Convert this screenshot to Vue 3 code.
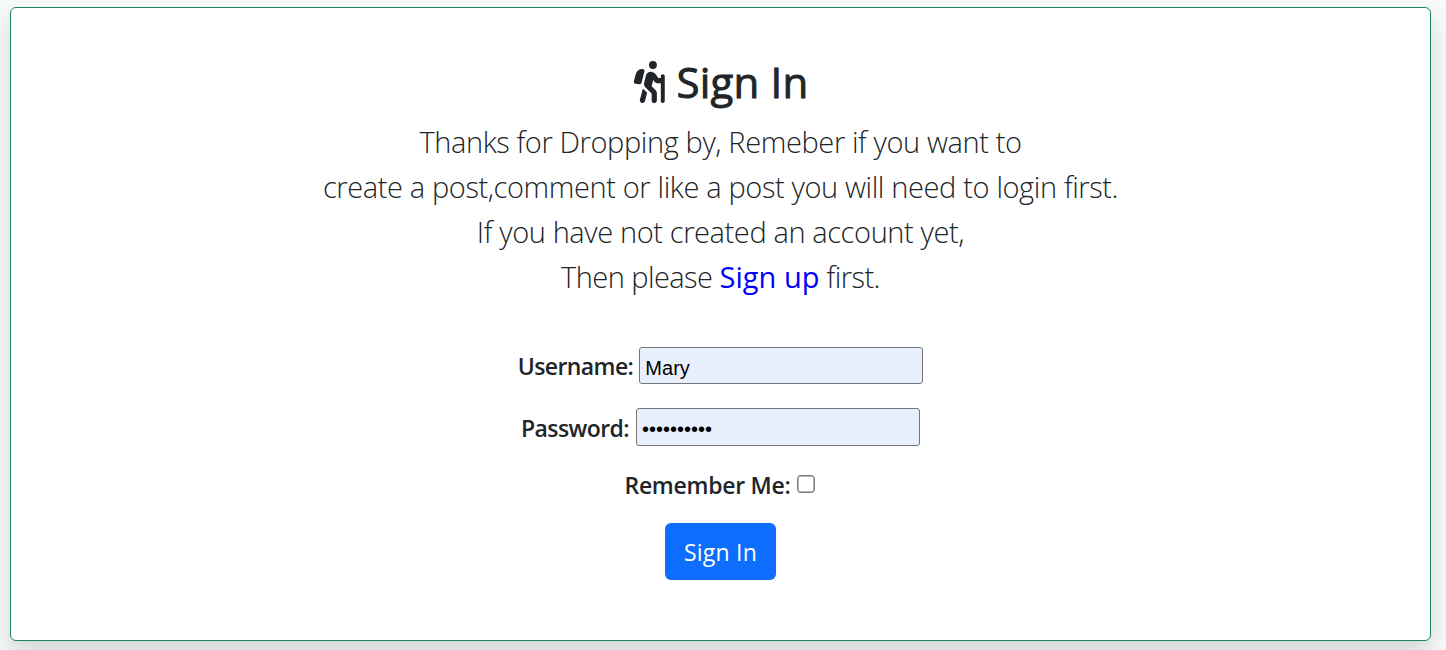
<script setup>
import { ref } from 'vue'

const username = ref('Mary')
const password = ref('mountain12')
const remember = ref(false)
</script>

<template>
  <div class="page">
    <main class="card">
      <h1 class="title">
        <svg class="hiker" viewBox="0 0 384 512" aria-hidden="true">
          <path fill="currentColor" d="M192 48a48 48 0 1 1 96 0 48 48 0 1 1 -96 0zm51.3 182.7L224.2 307l49.7 49.7c9 9 14.1 21.2 14.1 33.9V480c0 17.7-14.3 32-32 32s-32-14.3-32-32V397.3l-73.9-73.9c-15.8-15.8-22.2-38.6-16.9-60.3l20.4-84c8.3-34.1 42.7-54.9 76.7-46.4c19 4.8 35.6 16.4 46.4 32.7L305.1 208H336V184c0-13.3 10.7-24 24-24s24 10.7 24 24v55.8c0 .1 0 .2 0 .2s0 .2 0 .2V488c0 13.3-10.7 24-24 24s-24-10.7-24-24V272H296.6c-16 0-31-8-39.9-21.4l-13.3-20zM81.1 471.9L117.3 334c3 4.2 6.4 8.2 10.1 11.9l41.9 41.9L142.9 488.1c-4.5 17.1-22 27.3-39.1 22.8s-27.3-22-22.8-39.1zm55.5-346L101.4 266.5c-3 12.1-14.9 19.9-27.2 17.9l-47.9-8c-14-2.3-22.9-16.3-19.2-30L31.9 155c9.5-34.8 41.1-59 77.2-59h4.2c15.6 0 27.1 14.7 23.3 29.8z" />
        </svg>
        <span>Sign In</span>
      </h1>
      <div class="lead">
        <p>Thanks for Dropping by, Remeber if you want to</p>
        <p class="notice">create a post,comment or like a post you will need to login first.</p>
        <p>If you have not created an account yet,</p>
        <p class="signup">Then please <a href="#">Sign up</a> first.</p>
      </div>
      <form class="form" @submit.prevent>
        <div class="row user">
          <label for="user">Username:</label>
          <input id="user" v-model="username" class="field" type="text" />
        </div>
        <div class="row pass">
          <label for="pass">Password:</label>
          <input id="pass" v-model="password" class="field" type="password" />
        </div>
        <div class="row remember">
          <label for="rem">Remember Me:</label>
          <input id="rem" v-model="remember" class="check" type="checkbox" />
        </div>
        <button class="submit" type="submit">Sign In</button>
      </form>
    </main>
  </div>
</template>

<style>
body {
  margin: 0;
  background: #f8f9fa;
}
</style>

<style scoped>
.page {
  box-sizing: border-box;
  height: 100vh;
  min-height: 650px;
  padding: 7px 0 0 10px;
  overflow: hidden;
}
.card {
  box-sizing: border-box;
  width: 1421px;
  height: 634px;
  padding-top: 49px;
  display: flex;
  flex-direction: column;
  align-items: center;
  background: #fff;
  border: 1px solid #198754;
  border-radius: 6px;
  box-shadow: 0 12px 24px rgba(0, 0, 0, 0.15);
  color: #212529;
  font-family: "Open Sans", "Noto Sans", sans-serif;
}
.title {
  display: flex;
  align-items: center;
  gap: 12px;
  height: 50px;
  margin: 0;
  font-size: 42px;
  line-height: 50px;
  font-weight: 500;
  letter-spacing: 0.2px;
  white-space: nowrap;
}
.title span {
  -webkit-text-stroke: 0.9px currentColor;
}
.hiker {
  width: 32px;
  height: 42px;
}
.lead {
  margin-top: 12px;
  font-size: 29px;
  font-weight: 300;
  line-height: 45px;
  letter-spacing: -0.39px;
  text-align: center;
  white-space: nowrap;
}
.lead p {
  margin: 0;
}
.lead .notice {
  letter-spacing: -0.42px;
  word-spacing: 0.2px;
}
.lead .signup {
  letter-spacing: -0.55px;
}
.lead a {
  color: #00f;
  font-weight: 400;
  letter-spacing: 0.05px;
  text-decoration: none;
}
.form {
  display: flex;
  flex-direction: column;
  align-items: center;
  margin-top: 48px;
}
.row {
  display: flex;
  align-items: center;
  gap: 7px;
  font-size: 23px;
  font-weight: 600;
  line-height: 36px;
  letter-spacing: -0.58px;
  white-space: nowrap;
}
.user {
  gap: 6px;
}
.field {
  box-sizing: border-box;
  width: 284px;
  height: 37px;
  margin: 0;
  padding: 5px 5px 0;
  border: 1px solid #767676;
  border-radius: 3px;
  outline: none;
  background: #e8f0fe;
  color: #000;
  font: 20px "Liberation Sans", Arial, sans-serif;
}
.pass {
  margin-top: 24px;
}
.pass label {
  padding-top: 2px;
}
.pass .field {
  height: 38px;
  padding-top: 4px;
}
.remember {
  gap: 6px;
  height: 36px;
  margin-top: 21px;
  padding-right: 2px;
  letter-spacing: -0.27px;
}
.check {
  appearance: none;
  box-sizing: border-box;
  width: 18px;
  height: 18px;
  margin: 0 0 2px;
  border: 1px solid #767676;
  border-radius: 3.5px;
  box-shadow: inset 0 0 0 0.5px #767676;
  background: #fff;
}
.submit {
  width: 111px;
  height: 57px;
  margin-top: 20px;
  padding: 0;
  border: 0;
  border-radius: 6px;
  background: #0d6efd;
  color: #fff;
  font-family: inherit;
  font-size: 23px;
  line-height: 36px;
  letter-spacing: 0.2px;
}
</style>
